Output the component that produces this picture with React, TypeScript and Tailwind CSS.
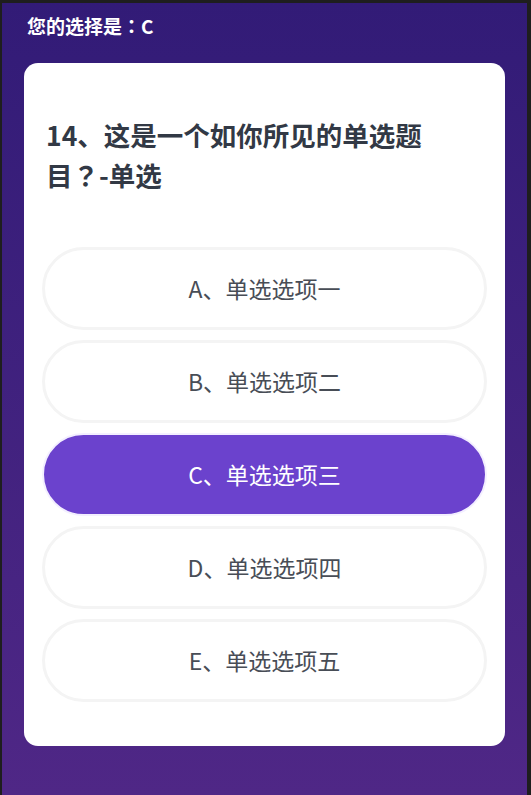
import React from "react";

const options = [
  { key: "A", text: "单选选项一" },
  { key: "B", text: "单选选项二" },
  { key: "C", text: "单选选项三" },
  { key: "D", text: "单选选项四" },
  { key: "E", text: "单选选项五" },
];

const tc = { fontFamily: '"Noto Sans CJK TC", "Noto Sans CJK SC", sans-serif' };

export default function App() {
  const selected = "C";
  return (
    <div
      className="w-[531px] h-[795px] bg-[#1e1e1e] pt-[3px] pl-[2px] pr-[4px] overflow-hidden"
      style={{ fontFamily: '"Noto Sans CJK SC", "Noto Sans", sans-serif' }}
    >
      <div className="h-full bg-gradient-to-b from-[#321b77] to-[#4f2786] flex flex-col">
        <div className="h-[60px] pl-[25px] pt-[10px] text-white font-bold text-[19px] leading-[26px]">
          您的选择是<span style={tc}>：</span>{selected}
        </div>
        <div className="mx-[22px] bg-white rounded-[14px] pt-[52px] pb-[44px] px-[18px]">
          <div className="pl-[4px] w-[396px] text-[26.5px] leading-[40px] font-bold text-[#323945]">
            14、这是一个如你所见的单选题目<span style={tc}>？</span>-单选
          </div>
          <div className="mt-[52px] flex flex-col gap-[10px]">
            {options.map((o) => {
              const active = o.key === selected;
              return (
                <div
                  key={o.key}
                  className={
                    active
                      ? "h-[83px] rounded-full border-2 border-[#f3efff] bg-[#6b42cd] text-white flex items-center justify-center text-[23px]"
                      : "h-[83px] rounded-full border-[3px] border-[#f4f4f4] bg-white text-[#484d56] flex items-center justify-center text-[23px]"
                  }
                >
                  {o.key}、{o.text}
                </div>
              );
            })}
          </div>
        </div>
      </div>
    </div>
  );
}
